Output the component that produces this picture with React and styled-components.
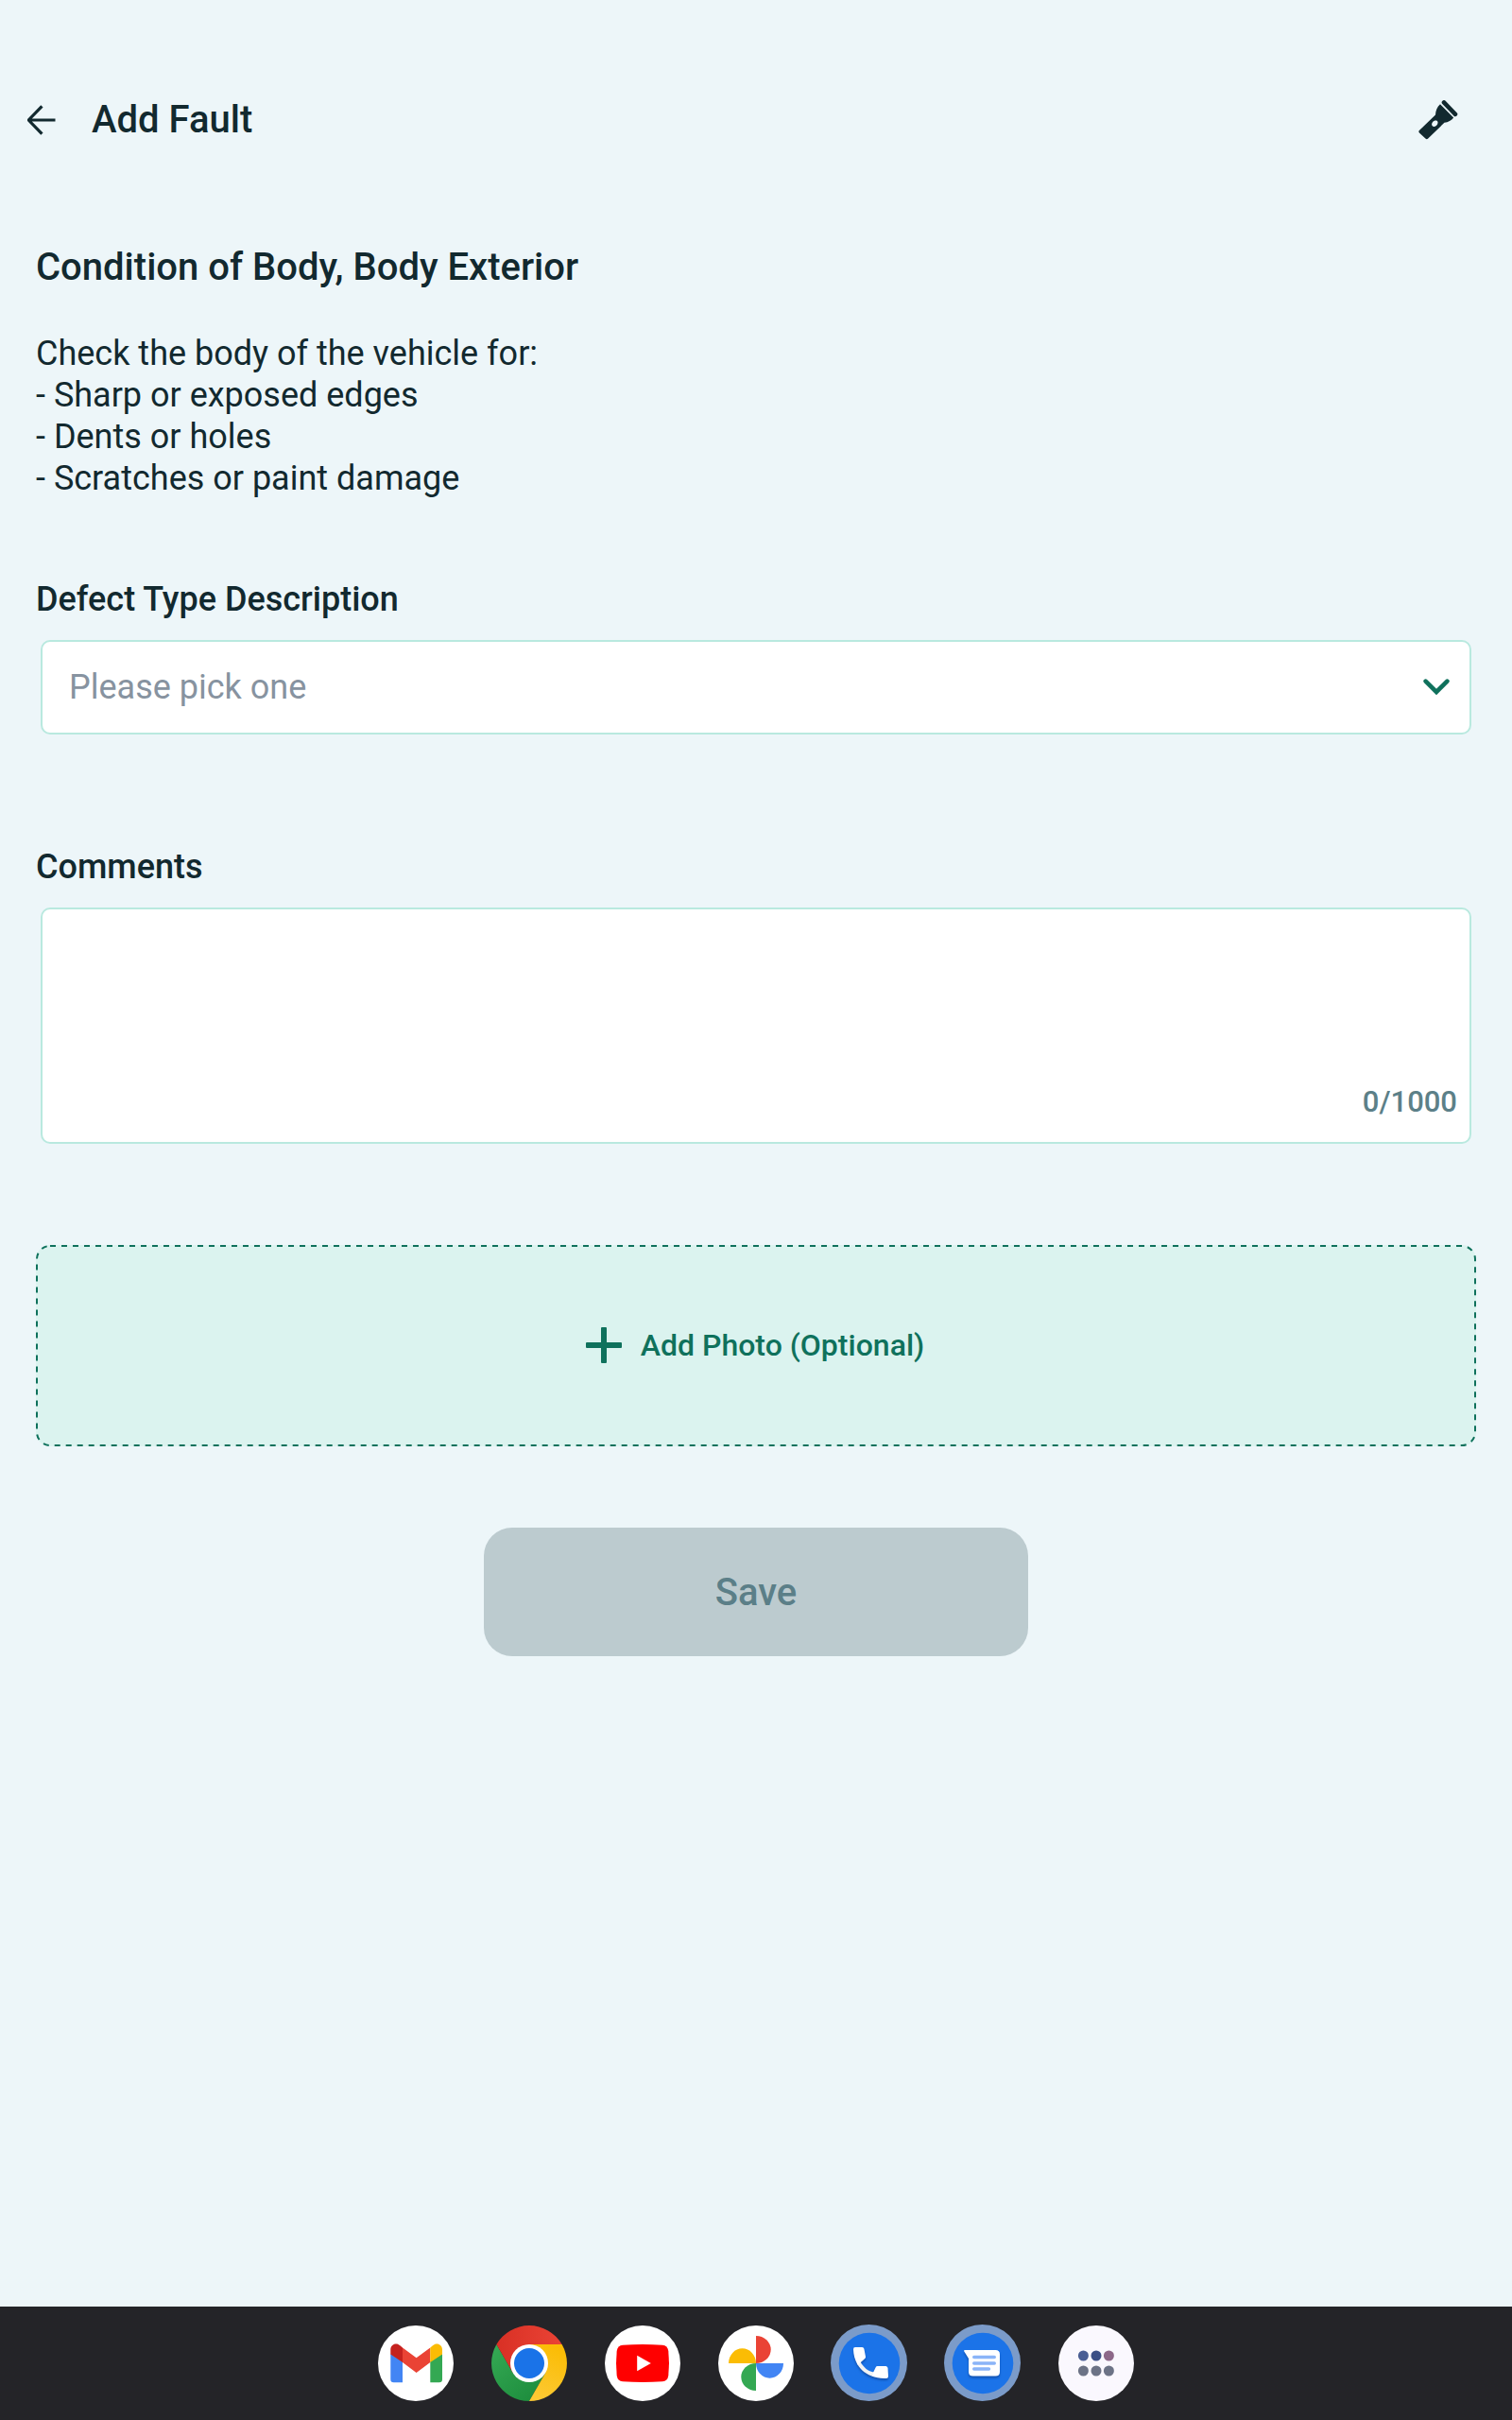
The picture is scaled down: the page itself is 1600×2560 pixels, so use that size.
import { useState } from 'react';
import styled, { createGlobalStyle } from 'styled-components';

const GlobalStyle = createGlobalStyle`
  * {
    box-sizing: border-box;
  }

  body {
    margin: 0;
    background: #edf6f9;
    color: #12292f;
    font-family: Roboto, "Liberation Sans", sans-serif;
  }

  button,
  select,
  textarea {
    font-family: inherit;
  }
`;

const BackIcon = () => (
    <svg width="30" height="32" viewBox="0 0 30 32" fill="none" stroke="currentColor" strokeWidth="3.2">
        <path d="M29.500 16H1.500M15.400 1.400L1.200 16l14.200 14.600" strokeLinejoin="round" />
    </svg>
);

const TorchIcon = () => (
    <svg width="42" height="42" viewBox="0 0 42 42" fill="currentColor">
        <path d="M27 2.400L39 14.800" stroke="currentColor" strokeWidth="4.600" strokeLinecap="round" />
        <path
            fillRule="evenodd"
            d="M23 4.200L37.200 18.600C35 21.500 31.500 23.400 27.400 23.800L10.200 40.600Q8.800 41.900 7.400 40.600L.9 34.400Q-.2 33.200 .9 32L18 15.400C18.200 11.200 19.800 7 23 4.200ZM14.800 23.400C13.200 25.800 14.600 28 16.600 27.900C19 27.800 21 25 20.400 23C19.800 21 16.600 21 14.800 23.400Z"
        />
    </svg>
);

const ChevronIcon = () => (
    <svg width="28" height="18" viewBox="0 0 28 18" fill="none" stroke="#0f715c" strokeWidth="4.600">
        <path d="M2.600 2.600L14 14L25.400 2.600" strokeLinecap="round" />
    </svg>
);

const PlusIcon = () => (
    <svg width="38" height="38" viewBox="0 0 38 38" fill="currentColor">
        <rect x="16" width="6" height="38" rx="1" />
        <rect y="16" width="38" height="6" rx="1" />
    </svg>
);

const GmailIcon = () => (
    <svg width="80" height="80" viewBox="0 0 80 80">
        <circle cx="40" cy="40" r="40" fill="#fff" />
        <path d="M13.300 30V57q0 3.300 3.300 3.300H26V38Z" fill="#4285f4" />
        <path d="M68 30V57q0 3.300-3.300 3.300H55.300V38Z" fill="#34a853" />
        <path d="M26 23.500L40.600 34.200L55.300 23.500V38.900L40.600 50L26 38.900Z" fill="#ea4335" />
        <path d="M13.300 30.500V25.500C13.300 20 19.500 17.300 23.700 21.600L26 23.500V38.900L13.300 30.500Z" fill="#c5221f" />
        <path d="M68 30.500V25.500C68 20 61.800 17.300 57.600 21.600L55.300 23.500V38.900L68 30.500Z" fill="#fbbc04" />
    </svg>
);

const ChromeIcon = () => (
    <svg width="80" height="80" viewBox="0 0 80 80">
        <defs>
            <linearGradient id="chromeRed" x1="0" x2="1">
                <stop offset="0" stopColor="#d93025" />
                <stop offset="1" stopColor="#ea4335" />
            </linearGradient>
            <linearGradient id="chromeYellow" x1="0.3" y1="1" x2="0.6" y2="0">
                <stop offset="0" stopColor="#fcc934" />
                <stop offset="1" stopColor="#fbbc04" />
            </linearGradient>
            <linearGradient id="chromeGreen" x1="0.7" y1="1" x2="0" y2="0.1">
                <stop offset="0" stopColor="#1e8e3e" />
                <stop offset="1" stopColor="#34a853" />
            </linearGradient>
        </defs>
        <path d="M5.400 20A40 40 0 0 0 40 80L57.300 50H22.700Z" fill="url(#chromeGreen)" />
        <path d="M74.600 20A40 40 0 0 1 40 80L57.300 50L40 20Z" fill="url(#chromeYellow)" />
        <path d="M5.400 20A40 40 0 0 1 74.600 20H40L22.700 50Z" fill="url(#chromeRed)" />
        <circle cx="40" cy="40" r="20" fill="#fff" />
        <circle cx="40" cy="40" r="16" fill="#1a73e8" />
    </svg>
);

const YoutubeIcon = () => (
    <svg width="80" height="80" viewBox="0 0 80 80">
        <circle cx="40" cy="40" r="40" fill="#fff" />
        <path
            d="M19 20.700Q40 19.300 61 20.700Q66.500 21.200 67.300 27Q68.700 40 67.300 53Q66.500 58.800 61 59.300Q40 60.700 19 59.300Q13.500 58.800 12.700 53Q11.300 40 12.700 27Q13.500 21.200 19 20.700Z"
            fill="#f00"
        />
        <path d="M34.200 31.700L48.800 40L34.200 48.300Z" fill="#fff" />
    </svg>
);

const PhotosIcon = () => (
    <svg width="80" height="80" viewBox="0 0 80 80">
        <circle cx="40" cy="40" r="40" fill="#fff" />
        <path d="M40 11A15.700 14.500 0 0 1 40 40Z" fill="#ea4335" />
        <path d="M69 40A14.500 15.700 0 0 1 40 40Z" fill="#4285f4" />
        <path d="M40 69A15.700 14.500 0 0 1 40 40Z" fill="#34a853" />
        <path d="M11 40A14.500 15.700 0 0 1 40 40Z" fill="#fbbc04" />
    </svg>
);

const Ring = () => (
    <>
        <circle cx="39.500" cy="39.500" r="40.500" fill="#7b9bc9" />
        <circle cx="40" cy="40" r="32.300" fill="#1b73e8" />
    </>
);

const PhoneIcon = () => (
    <svg width="80" height="80" viewBox="0 0 80 80" overflow="visible">
        <Ring />
        <g filter="drop-shadow(0 2px 1px rgba(10, 60, 140, 0.6))">
            <path d="M30.500 38.500C34 44.500 38.500 48.500 45 49.500L42.300 53.600C34.500 50.500 29 45 26.500 39.500Z" fill="#f1f3f4" />
            <path d="M25 23H32.300Q34 23 34.400 24.700L36 33Q36.200 34.200 35.300 35L27.800 41.800C24.500 36.500 23.200 31 23 25.200Q22.900 23 25 23Z" fill="#fff" />
            <path d="M48.500 43H57.500Q59.200 43.300 59.500 45L60 53.700Q60 55.900 58 56C52 56.300 47 55.500 42.200 53.600L46.700 44.200Q47.300 43 48.500 43Z" fill="#fff" />
        </g>
    </svg>
);

const MessagesIcon = () => (
    <svg width="80" height="80" viewBox="0 0 80 80" overflow="visible">
        <Ring />
        <path
            d="M21 26H53.500Q58 26 58 30.500V49Q58 53.500 53.500 53.500H29.500Q25 53.500 25 49V35L20.300 27.500Q19.600 26 21 26Z"
            fill="#fff"
            filter="drop-shadow(0 2px 1px rgba(10, 60, 140, 0.6))"
        />
        <path d="M30.700 33.500H52.300M30.700 40H52.300M30.700 46H46.500" stroke="#8ab4f8" strokeWidth="3.400" strokeLinecap="round" />
    </svg>
);

const AppsIcon = () => (
    <svg width="80" height="80" viewBox="0 0 80 80">
        <circle cx="40" cy="40" r="40" fill="#faf8fe" />
        <circle cx="26.400" cy="32" r="5.500" fill="#4a5e94" />
        <circle cx="40" cy="32" r="5.500" fill="#3b4f86" />
        <circle cx="53.400" cy="32" r="5.500" fill="#8d6889" />
        <circle cx="26.400" cy="48" r="5.500" fill="#6c7386" />
        <circle cx="40" cy="48" r="5.500" fill="#6c7386" />
        <circle cx="53.400" cy="48" r="5.500" fill="#6c7386" />
    </svg>
);

const apps = [
    { name: "Gmail", Icon: GmailIcon },
    { name: "Chrome", Icon: ChromeIcon },
    { name: "YouTube", Icon: YoutubeIcon },
    { name: "Photos", Icon: PhotosIcon },
    { name: "Phone", Icon: PhoneIcon },
    { name: "Messages", Icon: MessagesIcon },
    { name: "All apps", Icon: AppsIcon },
];

const MAX_LENGTH = 1000;

function App() {
    const [defect, setDefect] = useState("");
    const [comments, setComments] = useState("");

    return (
        <Page>
            <GlobalStyle />
            <Header>
                <IconButton aria-label="Back">
                    <BackIcon />
                </IconButton>
                <Title>Add Fault</Title>
                <IconButton aria-label="Torch">
                    <TorchIcon />
                </IconButton>
            </Header>

            <Main>
                <Heading>Condition of Body, Body Exterior</Heading>
                <Description>
                    {"Check the body of the vehicle for:\n- Sharp or exposed edges\n- Dents or holes\n- Scratches or paint damage"}
                </Description>

                <Field $top={86}>
                    <Label htmlFor="defect">Defect Type Description</Label>
                    <Control>
                        <Select id="defect" value={defect} onChange={(e) => setDefect(e.target.value)}>
                            <option value="">Please pick one</option>
                        </Select>
                        <Chevron>
                            <ChevronIcon />
                        </Chevron>
                    </Control>
                </Field>

                <Field $top={120}>
                    <Label htmlFor="comments">Comments</Label>
                    <Control>
                        <TextArea
                            id="comments"
                            maxLength={MAX_LENGTH}
                            value={comments}
                            onChange={(e) => setComments(e.target.value)}
                        />
                        <Counter>{comments.length}/{MAX_LENGTH}</Counter>
                    </Control>
                </Field>

                <PhotoButton>
                    <DashedOutline aria-hidden="true">
                        <rect x="1" y="1" rx="14" />
                    </DashedOutline>
                    <PlusIcon />
                    Add Photo (Optional)
                </PhotoButton>

                <SaveButton disabled={!defect}>Save</SaveButton>
            </Main>

            <Dock>
                {apps.map(({ name, Icon }) => (
                    <DockButton key={name} aria-label={name}>
                        <Icon />
                    </DockButton>
                ))}
            </Dock>
        </Page>
    );
}

const Page = styled.div`
  display: flex;
  flex-direction: column;
  min-height: 100vh;
`;

const Header = styled.header`
  display: flex;
  align-items: center;
  gap: 38px;
  min-height: 182px;
  padding: 72px 57px 0 29px;
`;

const IconButton = styled.button`
  display: flex;
  padding: 0;
  border: none;
  background: none;
  color: inherit;
  cursor: pointer;
`;

const Title = styled.h1`
  flex: 1;
  margin: 0;
  font-size: 40px;
  line-height: 44px;
  font-weight: 500;
`;

const Main = styled.main`
  flex: 1;
  display: flex;
  flex-direction: column;
  padding: 79px 38px 60px;
`;

const Heading = styled.h2`
  margin: 0;
  font-size: 40px;
  line-height: 44px;
  font-weight: 500;
`;

const Description = styled.p`
  margin: 47px 0 0;
  font-size: 36px;
  line-height: 44px;
  white-space: pre-line;
`;

const Field = styled.div`
  margin-top: ${(props) => props.$top}px;
`;

const Label = styled.label`
  display: block;
  margin-bottom: 23px;
  font-size: 36px;
  line-height: 40px;
  font-weight: 500;
`;

const Control = styled.div`
  position: relative;
  display: flex;
  margin: 0 5px;
`;

const Select = styled.select`
  flex: 1;
  height: 100px;
  padding: 0 70px 0 28px;
  border: 2px solid #b9e9df;
  border-radius: 10px;
  background: #fff;
  color: #8793a0;
  font-size: 36px;
  appearance: none;
  outline: none;
`;

const Chevron = styled.span`
  position: absolute;
  top: 0;
  right: 23px;
  bottom: 0;
  display: flex;
  align-items: center;
  pointer-events: none;
`;

const TextArea = styled.textarea`
  flex: 1;
  height: 250px;
  padding: 20px 28px 60px;
  border: 2px solid #b9e9df;
  border-radius: 10px;
  background: #fff;
  color: inherit;
  font-size: 36px;
  resize: none;
  outline: none;
`;

const Counter = styled.span`
  position: absolute;
  right: 15px;
  bottom: 24px;
  color: #5c8088;
  font-size: 31px;
  line-height: 40px;
  font-weight: 500;
`;

const PhotoButton = styled.button`
  position: relative;
  display: flex;
  justify-content: center;
  align-items: center;
  gap: 20px;
  height: 213px;
  margin-top: 107px;
  padding: 0 2px 2px 0;
  border: none;
  border-radius: 15px;
  background: #dbf3ef;
  color: #0f715c;
  font-size: 32px;
  font-weight: 500;
  cursor: pointer;
`;

/* css dashed borders can't set the dash length */
const DashedOutline = styled.svg`
  position: absolute;
  inset: 0;
  width: 100%;
  height: 100%;

  rect {
    width: calc(100% - 2px);
    height: calc(100% - 2px);
    fill: none;
    stroke: #0f715c;
    stroke-width: 2px;
    stroke-dasharray: 6 6;
  }
`;

const SaveButton = styled.button`
  align-self: center;
  width: 576px;
  max-width: 100%;
  height: 136px;
  margin-top: 86px;
  border: none;
  border-radius: 30px;
  background: #0f715c;
  color: #fff;
  font-size: 40px;
  font-weight: 500;
  cursor: pointer;

  &:disabled {
    background: #bccbcf;
    color: #5b7f88;
    cursor: default;
  }
`;

const Dock = styled.nav`
  display: flex;
  justify-content: center;
  gap: 40px;
  padding: 20px;
  background: #242428;
`;

const DockButton = styled.button`
  display: flex;
  padding: 0;
  border: none;
  background: none;
  cursor: pointer;
`;

export default App;
